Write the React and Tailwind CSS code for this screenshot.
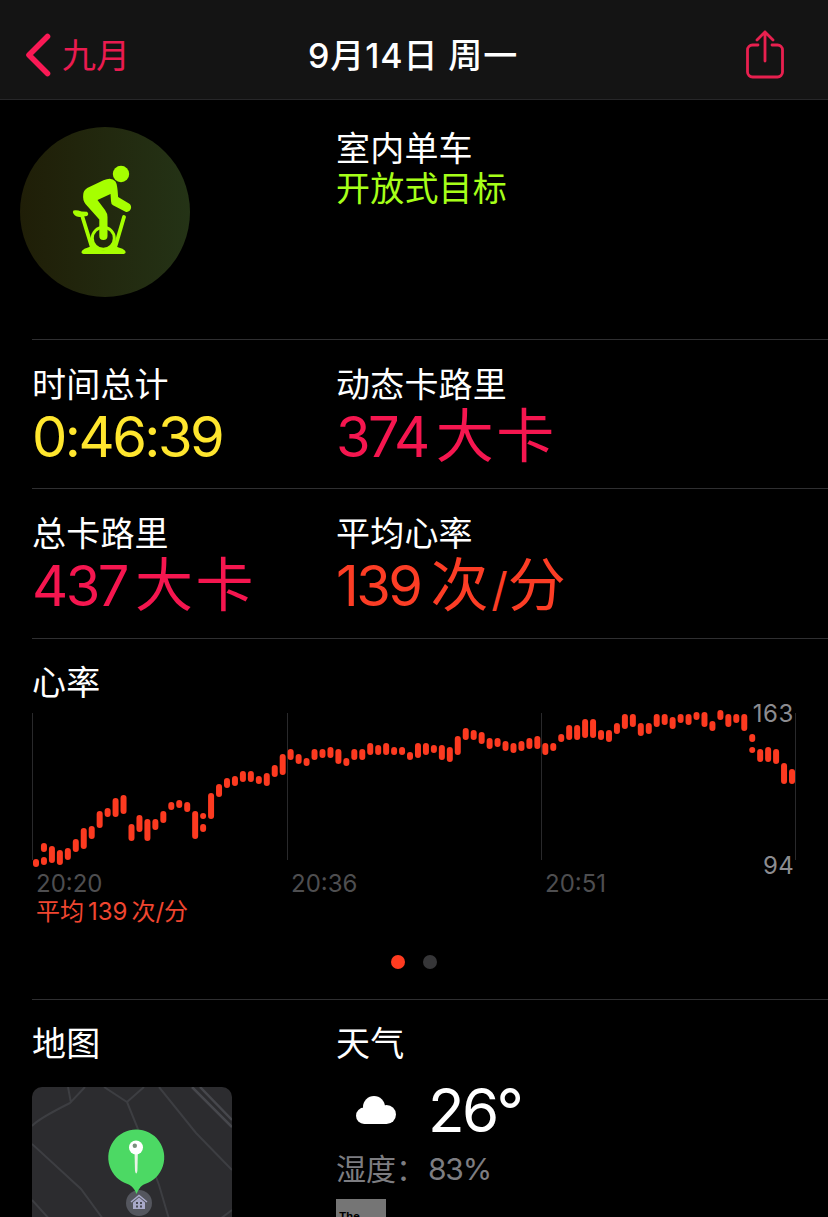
import { clsx } from 'clsx';

// [top, bottom] of every reading inside the 764x160 plot, two ranges when the minute has a gap
const heartRate = [
  [[151, 159]], [[135, 144], [149, 157]], [[138, 155]], [[142, 157]], [[140, 152]], [[131, 144]],
  [[120, 141]], [[118, 131]], [[103, 120]], [[100, 109]], [[90, 109]], [[87, 106]],
  [[116, 133]], [[107, 124]], [[111, 133]], [[111, 122]], [[103, 115]], [[94, 102]],
  [[92, 100]], [[94, 104]], [[103, 131]], [[105, 111], [116, 124]], [[85, 111]], [[76, 89]],
  [[70, 80]], [[68, 78]], [[63, 74]], [[63, 74]], [[68, 76]], [[65, 78]],
  [[57, 69]], [[46, 67]], [[41, 52]], [[46, 56]], [[50, 58]], [[41, 52]],
  [[41, 50]], [[39, 50]], [[41, 56]], [[50, 58]], [[41, 52]], [[41, 52]],
  [[35, 47]], [[37, 47]], [[35, 47]], [[39, 47]], [[39, 47]], [[44, 52]],
  [[35, 50]], [[35, 47]], [[37, 45]], [[37, 52]], [[39, 54]], [[28, 47]],
  [[20, 32]], [[22, 32]], [[24, 36]], [[30, 41]], [[30, 39]], [[33, 43]],
  [[35, 45]], [[33, 43]], [[30, 41]], [[28, 41]], [[35, 47]], [[35, 43]],
  [[26, 34]], [[17, 32]], [[17, 32]], [[11, 30]], [[11, 30]], [[22, 32]],
  [[22, 34]], [[15, 26]], [[6, 21]], [[6, 19]], [[15, 28]], [[15, 26]],
  [[6, 19]], [[6, 17]], [[9, 21]], [[6, 15]], [[6, 17]], [[4, 12]],
  [[4, 19]], [[13, 23]], [[2, 12]], [[6, 19]], [[6, 15]], [[6, 23]],
  [[26, 34], [39, 45]], [[41, 54]], [[39, 54]], [[41, 56]], [[55, 76]], [[61, 76]],
];

const STEP = 7.958;

const Label = ({ children, className }) => (
  <p className={clsx('text-[34px] leading-10 tracking-[0.2px] whitespace-nowrap', className)}>{children}</p>
);

const Header = () => (
  <header className="flex items-center h-[100px] pt-2.5 pl-6 pr-11 bg-[#141414] border-b border-[#272729]">
    <div className="flex flex-1 items-center gap-2.5 text-[#fa1955]">
      <svg className="w-7 h-11" viewBox="0 0 28 44" fill="none" stroke="currentColor" strokeWidth="5.6" strokeLinecap="round" strokeLinejoin="round">
        <path d="M23.500 3.500 5 22l18.500 18.500" />
      </svg>
      <span className="pt-0.5 text-[34px] leading-10 text-[#ea1b50]">九月</span>
    </div>
    <h1 className="pt-0.5 pl-[18px] text-[34px] leading-10 font-medium tracking-[0.9px]">9月14日 周一</h1>
    <div className="flex flex-1 justify-end text-[#e8204f]">
      <svg className="w-[38px] h-[50px]" viewBox="0 0 38 50" fill="none" stroke="currentColor" strokeWidth="2.8" strokeLinecap="round" strokeLinejoin="round">
        <path d="M12 15H6.500a5 5 0 0 0-5 5v22a5 5 0 0 0 5 5h25a5 5 0 0 0 5-5V20a5 5 0 0 0-5-5H26" />
        <path d="M19 31V2M11 10l8-8 8 8" />
      </svg>
    </div>
  </header>
);

const CyclingIcon = () => (
  <svg className="w-[170px] h-[170px]" viewBox="0 0 170 170" fill="none" stroke="#a6ff00" strokeLinecap="round" strokeLinejoin="round">
    <circle cx="101" cy="47" r="8.200" fill="#a6ff00" stroke="none" />
    {/* rider */}
    <path d="M63.200 68q0-4.500 4-7L83.500 53.300q8-3.800 12 1.200 2 3 2.600 15.500l10.900 6.500q3 2 1.800 5.500-1.600 3.800-5.300 2.800L93 78.300q-2-1.200-2-4l-.5-7.300L77.500 73l7.500 10q2.500 3.500 2.500 7v19a4.100 4.100 0 0 1-8.200 0V92.500L65.500 77q-3-4-2.300-9z" fill="#a6ff00" stroke="none" />
    {/* bike */}
    <path d="M53.500 83.500q3-1 8 1l5.500.2q2.500 2.500 0 4.300l-6.500.9q-4.500.3-7-3.200-1.300-2 0-3.200z" fill="#a6ff00" stroke="none" />
    <path d="m62.500 90 9 29" strokeWidth="3.800" />
    <path d="m104 90-8.500 29" strokeWidth="3.800" />
    <circle cx="83.300" cy="111.300" r="11" strokeWidth="3" />
    <path d="M63.500 127q-3-.5-1.500-3.200 2-2.300 6-3.300 4-1 4-5l4.500 5q6.800 5.500 13.600 0l4.500-5q0 4 4 5 4.500 1 6.500 3.300 1.500 2.700-1.500 3.200z" fill="#a6ff00" stroke="none" />
  </svg>
);

const Stat = ({ label, color, children }) => (
  <div>
    <Label>{label}</Label>
    <p className={clsx('flex mt-0.5 text-[56px] leading-[60px] whitespace-nowrap', color)}>{children}</p>
  </div>
);

const Number = ({ children }) => <span className="tracking-[-2.5px]">{children}</span>;

const Unit = ({ children, className }) => (
  <span className={clsx('-mt-px text-[58px] tracking-[2.6px]', className)}>{children}</span>
);

const Row = ({ children, className }) => (
  <section className={clsx('ml-8 grid grid-cols-[304px_1fr] border-b border-[#2f2f31]', className)}>
    {children}
  </section>
);

const HeartRateChart = () => (
  <div className="relative w-[764px] mt-[5px]">
    <svg className="block w-[764px] h-40" viewBox="0 0 764 160">
      {[0.5, 255.5, 509.5, 763.5].map((x) => (
        <path key={x} d={`M${x} 5V152`} stroke="#29292b" />
      ))}
      {heartRate.map((ranges, i) =>
        ranges.map(([top, bottom]) => (
          <rect key={`${i}-${top}`} x={1 + i * STEP} y={top} width="6" height={bottom - top} rx="3" fill="#fc3a20" />
        ))
      )}
    </svg>
    <span className="absolute right-0.5 -top-[9px] text-2xl leading-[30px] text-[#8c8c90] tracking-[0.6px]">163</span>
    <span className="absolute right-0.5 top-[143px] text-2xl leading-[30px] text-[#8c8c90] tracking-[0.3px]">94</span>
    <div className="grid grid-cols-[255px_254px_1fr] pt-px pl-1 text-2xl leading-[30px] text-[#4e4e50]">
      <span>20:20</span>
      <span>20:36</span>
      <span>20:51</span>
    </div>
  </div>
);

const MapPreview = () => (
  <svg className="block mt-[23px] w-[200px] h-[200px] rounded-[10px]" viewBox="0 0 200 200" fill="none">
    <rect width="200" height="200" fill="#2c2c2f" />
    <g stroke="#3d3e42" strokeWidth="2">
      <path d="M0 39Q6 32 38 16L53 0M36 0l3 16" />
      <path d="m72 0 23 15L112 0M95 15l11 27 21 56 10 34" />
      <path d="m127 0 37 46 36 37" />
      <path d="m0 57 49 45 22 30M0 113l20 22M188 132l12-9" />
    </g>
    <path d="m160 0 40 40M168 0l32 33" stroke="#46474c" strokeWidth="2.500" />
    <circle cx="107" cy="116" r="13" fill="#54565e" />
    <path d="m99 115 8-6.500 8 6.500" stroke="#a9aaca" strokeWidth="1.500" />
    <path d="m101 115.500 6-5 6 5v6.500h-12z" fill="#a9aaca" />
    <path d="M104 115h2v2h-2zM108 115h2v2h-2zM104 118.500h2v2h-2zM108 118.500h2v2h-2z" fill="#484a54" />
    <path d="M104.500 107c-2-5-4-8-9-10A28 28 0 1 1 113 97c-5 2-6 5-8.500 10z" fill="#4cd964" />
    <path d="M102.500 64h3.400l-.5 20q-1.200 5-2.400 0z" fill="#e9f3e7" />
    <circle cx="104" cy="60.500" r="7" fill="#fff" />
    <circle cx="102.800" cy="58.800" r="2.200" fill="#79907c" />
  </svg>
);

const Weather = () => (
  <div>
    <Label>天气</Label>
    <div className="flex items-center mt-[15px] h-[62px]">
      <svg className="w-10 h-7 ml-5" viewBox="0 0 40 28" fill="#fff">
        <circle cx="8.200" cy="19.800" r="8.200" />
        <circle cx="18" cy="11" r="11" />
        <circle cx="30.500" cy="18.500" r="9.500" />
        <path d="M8.200 12h22.300v16H8.200z" />
      </svg>
      <span className="ml-8 text-[60px] leading-[62px] tracking-[-2.7px]">26°</span>
    </div>
    <p className="flex mt-2.5 text-[30px] leading-9 text-[#7d7d81] whitespace-nowrap">
      <span className="w-[92px]">湿度：</span>
      <span className="tracking-[-1.2px]">83%</span>
    </p>
    <div className="mt-3 w-[50px] h-10 pl-[3px] pt-[9px] bg-[#757575] text-[11px] leading-4 font-bold text-black">The</div>
  </div>
);

export default function App() {
  return (
    <div className="w-[828px] h-[1217px] overflow-hidden bg-black text-white font-['Inter','Noto_Sans_CJK_SC',sans-serif]">
      <Header />

      <Row className="h-60 pt-[27px]">
        <div className="-ml-3 w-[170px] h-[170px] rounded-full bg-linear-to-r from-[#1f1e07] to-[#243316]">
          <CyclingIcon />
        </div>
        <div className="pt-0.5">
          <Label>室内单车</Label>
          <Label className="text-[#a6ff19]">开放式目标</Label>
        </div>
      </Row>

      <Row className="h-[149px] pt-[25px]">
        <Stat label="时间总计" color="text-[#ffe62e]"><Number>0:46:39</Number></Stat>
        <Stat label="动态卡路里" color="text-[#f5164f]">
          <Number>374</Number><Unit className="ml-2">大卡</Unit>
        </Stat>
      </Row>

      <Row className="h-[150px] pt-[25px]">
        <Stat label="总卡路里" color="text-[#f5164f]">
          <Number>437</Number><Unit className="ml-2">大卡</Unit>
        </Stat>
        <Stat label="平均心率" color="text-[#fc3d25]">
          <Number>139</Number>
          <Unit className="ml-2.5">次<span className="text-[46px] tracking-normal">/</span>分</Unit>
        </Stat>
      </Row>

      <section className="ml-8 h-[361px] pt-6 border-b border-[#2f2f31]">
        <Label>心率</Label>
        <HeartRateChart />
        <p className="pl-1 text-2xl leading-[26px] text-[#f04630] whitespace-nowrap">
          平均<span className="mx-1">139</span>次/分
        </p>
        <div className="flex justify-center gap-[18px] mt-[30px] pr-8">
          <span className="w-3.5 h-3.5 rounded-full bg-[#ff3b20]" />
          <span className="w-3.5 h-3.5 rounded-full bg-[#363638]" />
        </div>
      </section>

      <Row className="pt-6">
        <div>
          <Label>地图</Label>
          <MapPreview />
        </div>
        <Weather />
      </Row>
    </div>
  );
}
